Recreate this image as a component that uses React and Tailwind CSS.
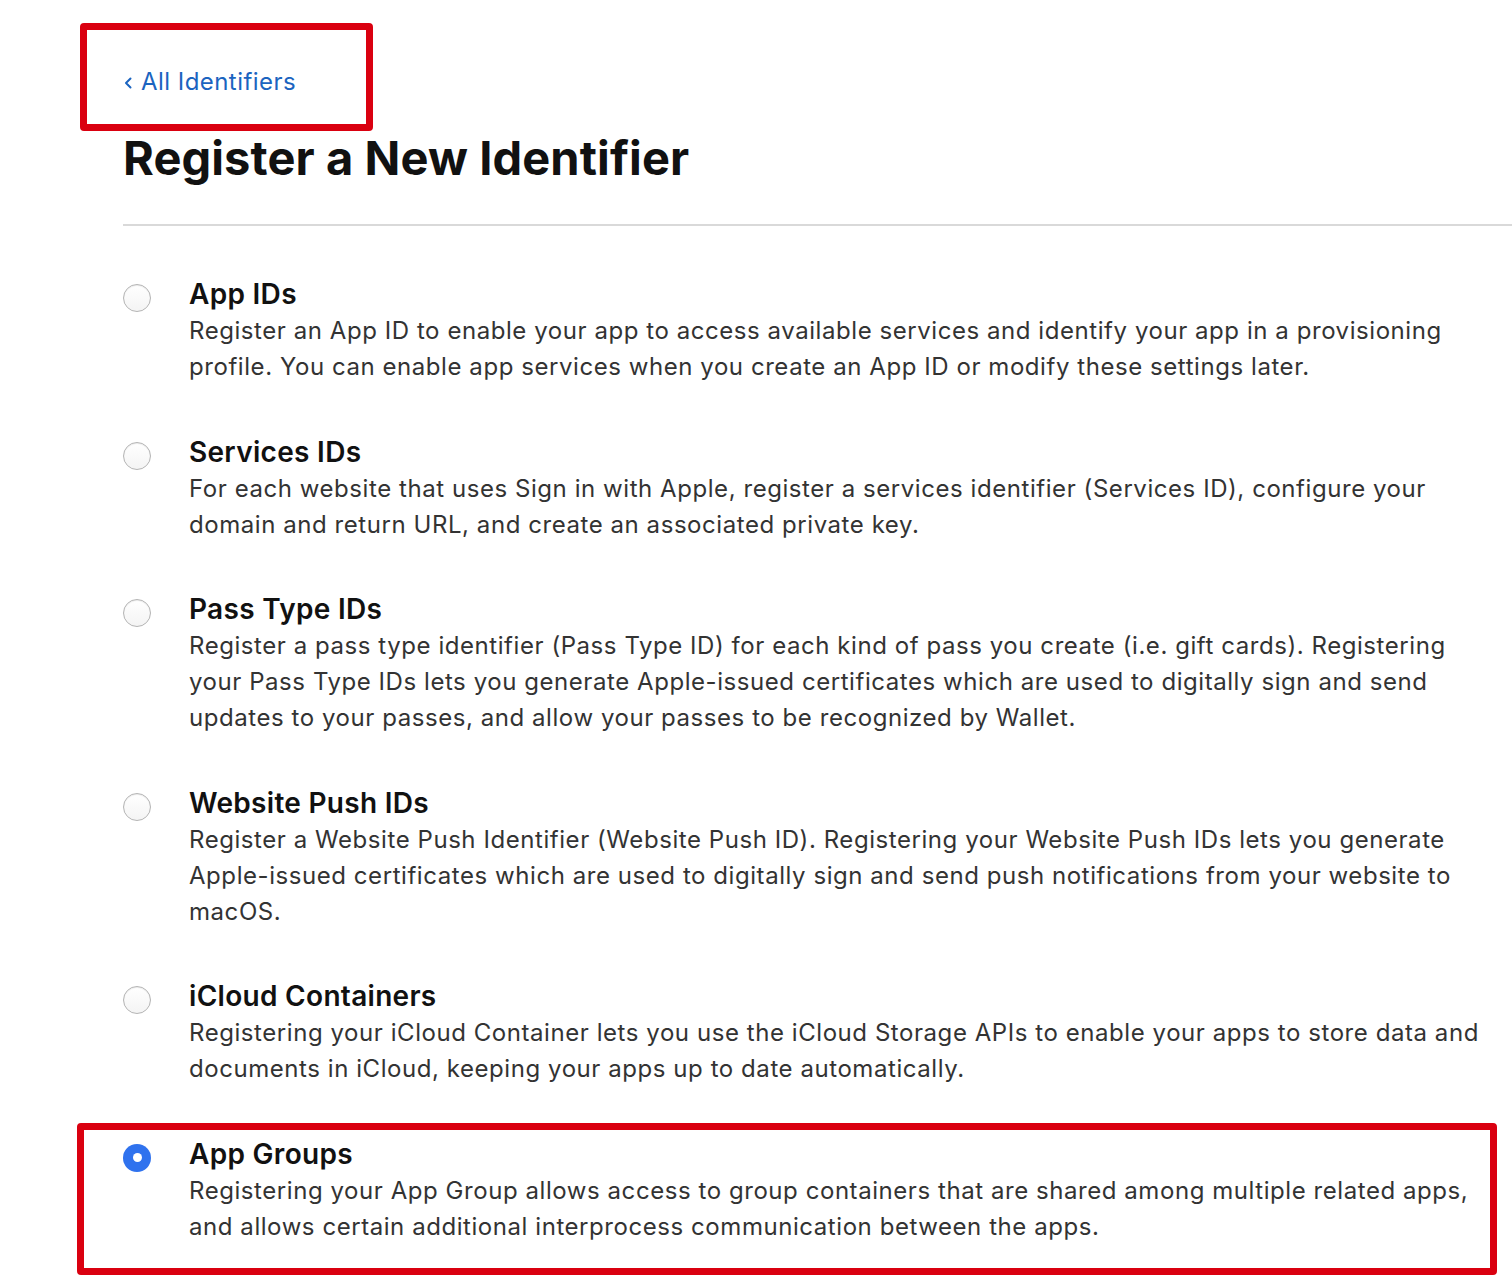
import React from "react";

const items = [
  {
    title: "App IDs",
    lines: [
      "Register an App ID to enable your app to access available services and identify your app in a provisioning",
      "profile. You can enable app services when you create an App ID or modify these settings later.",
    ],
  },
  {
    title: "Services IDs",
    lines: [
      "For each website that uses Sign in with Apple, register a services identifier (Services ID), configure your",
      "domain and return URL, and create an associated private key.",
    ],
  },
  {
    title: "Pass Type IDs",
    lines: [
      "Register a pass type identifier (Pass Type ID) for each kind of pass you create (i.e. gift cards). Registering",
      "your Pass Type IDs lets you generate Apple-issued certificates which are used to digitally sign and send",
      "updates to your passes, and allow your passes to be recognized by Wallet.",
    ],
  },
  {
    title: "Website Push IDs",
    lines: [
      "Register a Website Push Identifier (Website Push ID). Registering your Website Push IDs lets you generate",
      "Apple-issued certificates which are used to digitally sign and send push notifications from your website to",
      "macOS.",
    ],
  },
  {
    title: "iCloud Containers",
    lines: [
      "Registering your iCloud Container lets you use the iCloud Storage APIs to enable your apps to store data and",
      "documents in iCloud, keeping your apps up to date automatically.",
    ],
  },
  {
    title: "App Groups",
    lines: [
      "Registering your App Group allows access to group containers that are shared among multiple related apps,",
      "and allows certain additional interprocess communication between the apps.",
    ],
    selected: true,
  },
];

function Radio({ selected }) {
  if (selected) {
    return (
      <div className="w-[28px] h-[28px] rounded-full bg-[#2f72ee] flex items-center justify-center">
        <div className="w-[9px] h-[9px] rounded-full bg-white" />
      </div>
    );
  }
  return (
    <div className="w-[28px] h-[28px] rounded-full border border-[#b4b4b4] bg-gradient-to-b from-white to-[#f4f4f4] shadow-[inset_0_1px_1px_rgba(0,0,0,0.08)]" />
  );
}

export default function App() {
  return (
    <div className="relative min-h-[1280px] bg-white pl-[123px] font-['Inter','Noto_Sans',sans-serif] overflow-hidden">
      <div className="pt-[66px]">
        <a className="flex items-center gap-[8px] text-[24px] leading-[32px] text-[#1b64c0] tracking-[0.45px]">
          <svg width="10" height="16" viewBox="0 0 10 16" className="mt-[2px]">
            <path d="M7.5 3.5 L3 8 L7.5 12.5" fill="none" stroke="#1b64c0" strokeWidth="2" strokeLinecap="round" strokeLinejoin="round" />
          </svg>
          <span>All Identifiers</span>
        </a>
      </div>

      <h1 className="mt-[30px] text-[47px] leading-[60px] font-bold text-[#111] tracking-[0.1px]">
        Register a New Identifier
      </h1>

      <div className="mt-[36px] border-t-2 border-[#d9d9d9]" />

      <div className="mt-[49px] flex flex-col gap-[47.5px]">
        {items.map((item) => (
          <div key={item.title} className="flex">
            <div className="w-[67px] shrink-0 pt-[9px]">
              <Radio selected={item.selected} />
            </div>
            <div className="flex-1 -ml-[1px]">
              <div className="text-[28px] leading-[38px] font-semibold text-[#111] tracking-[0.3px]">
                {item.title}
              </div>
              <p className="text-[24px] leading-[36px] text-[#333] tracking-[0.56px]">
                {item.lines.map((line) => (
                  <span key={line} className="block whitespace-nowrap">
                    {line}
                  </span>
                ))}
              </p>
            </div>
          </div>
        ))}
      </div>

      <div className="pointer-events-none absolute left-[80px] top-[23px] w-[293px] h-[108px] border-[7px] border-[#da0010] rounded-[4px]" />
      <div className="pointer-events-none absolute left-[77px] top-[1123px] w-[1420px] h-[152px] border-[7px] border-[#da0010] rounded-[4px]" />
    </div>
  );
}
